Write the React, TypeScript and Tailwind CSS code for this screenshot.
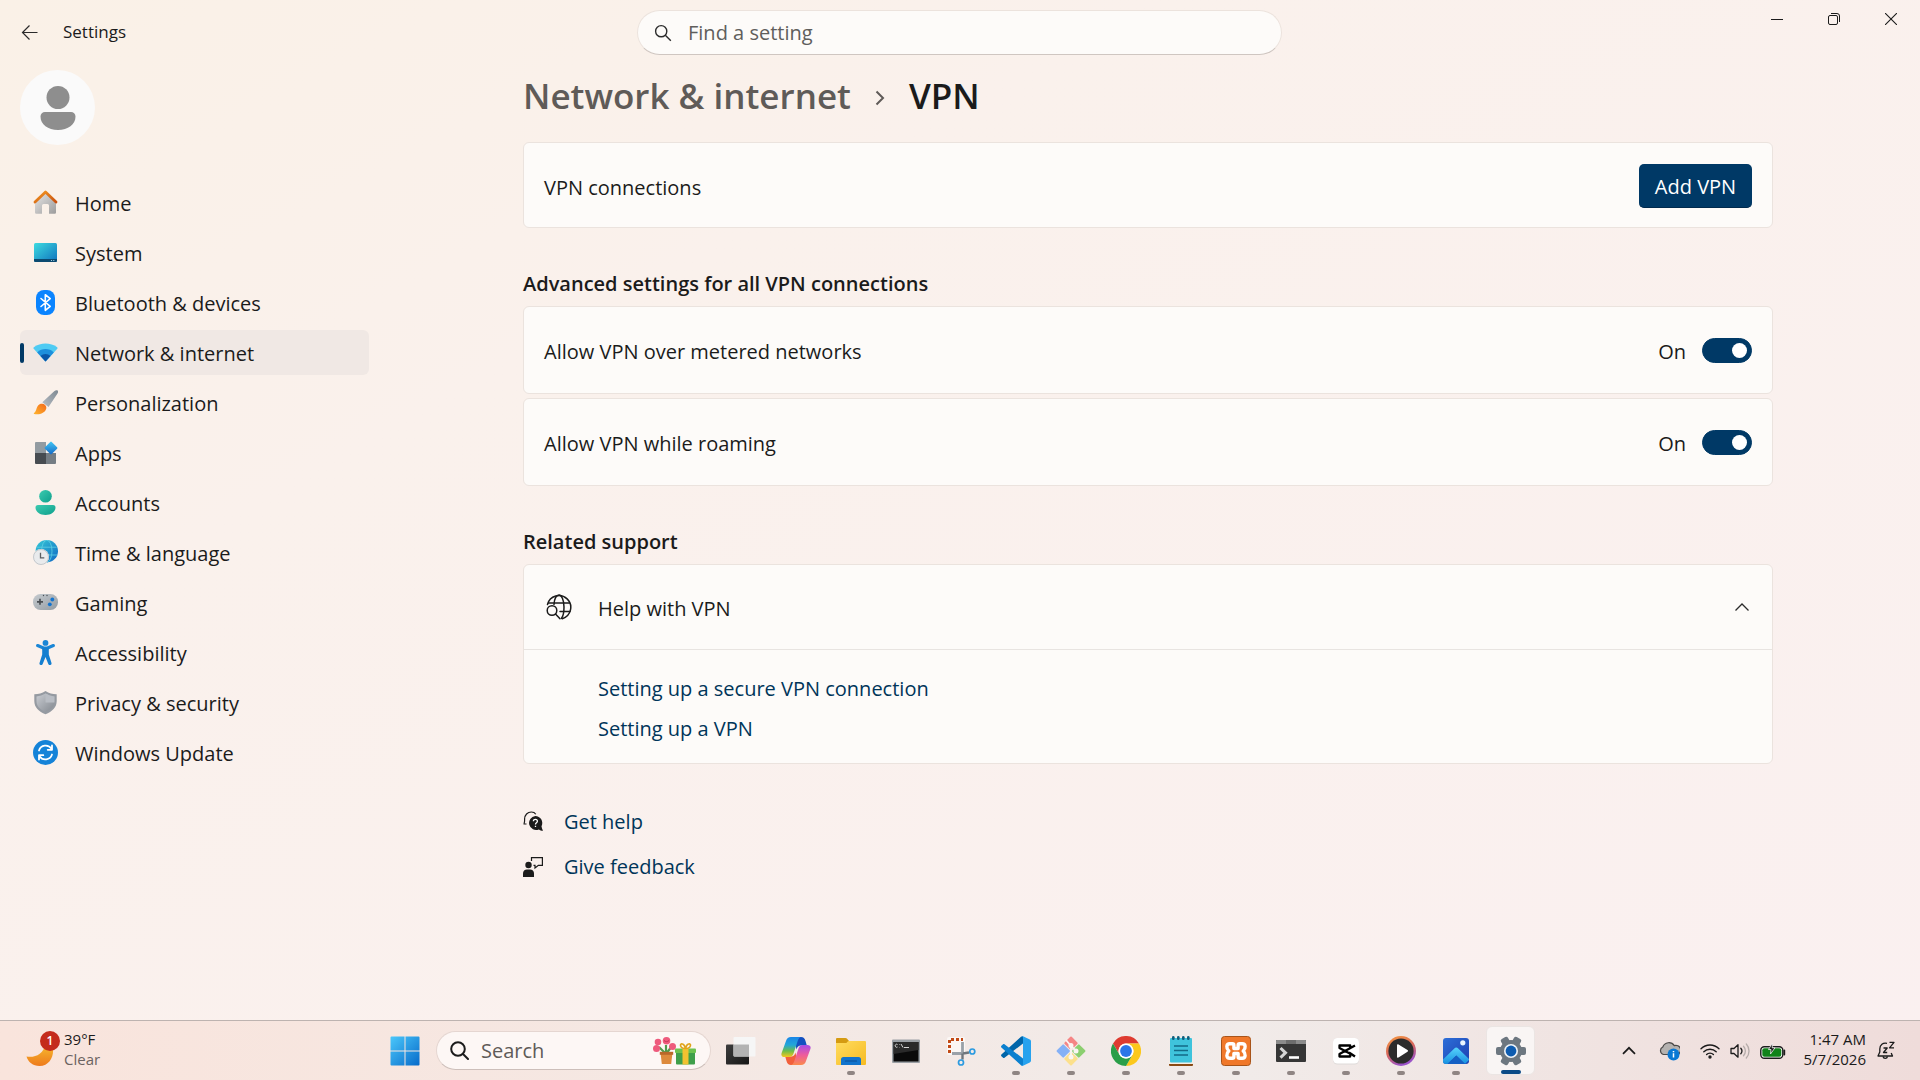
import { useState } from 'react'
import type { ReactNode } from 'react'
import clsx from 'clsx'

interface NavItem {
  label: string
  icon: ReactNode
}

interface TaskApp {
  name: string
  icon: ReactNode
  running?: boolean
  active?: boolean
}

/* ---------- sidebar icons ---------- */

const HomeIcon = () => (
  <svg viewBox="0 0 25 25" className="size-[25px]">
    <defs>
      <linearGradient id="homeWall" x1="0" y1="0" x2="1" y2="1">
        <stop offset="0" stopColor="#e8e8e8" />
        <stop offset="1" stopColor="#9c9c9c" />
      </linearGradient>
      <linearGradient id="homeRoof" x1="0" y1="0" x2="1" y2="1">
        <stop offset="0" stopColor="#f59a23" />
        <stop offset="1" stopColor="#c8500f" />
      </linearGradient>
    </defs>
    <path d="M2 11 12.500 2 23 11v11.500a1.200 1.200 0 0 1-1.200 1.200H16V15.500a1.500 1.500 0 0 0-1.500-1.500h-4A1.500 1.500 0 0 0 9 15.500v8.200H3.200A1.200 1.200 0 0 1 2 22.500Z" fill="url(#homeWall)" />
    <path d="M2 12 12.500 2 23 12" fill="none" stroke="url(#homeRoof)" strokeWidth="2.800" strokeLinecap="round" strokeLinejoin="round" />
  </svg>
)

const SystemIcon = () => (
  <svg viewBox="0 0 25 25" className="size-[25px]">
    <defs>
      <linearGradient id="sysScreen" x1="0" y1="0" x2="1" y2="1">
        <stop offset="0" stopColor="#3ddbe0" />
        <stop offset="1" stopColor="#0f72bd" />
      </linearGradient>
    </defs>
    <rect x="1" y="3" width="23" height="19" rx="1.500" fill="url(#sysScreen)" />
    <path d="M1 19h23v1.500a1.500 1.500 0 0 1-1.500 1.500h-20A1.500 1.500 0 0 1 1 20.500Z" fill="#0b4a70" />
    <circle cx="18.500" cy="20.500" r=".6" fill="#bfe6f5" />
    <circle cx="20.800" cy="20.500" r=".6" fill="#bfe6f5" />
  </svg>
)

const BluetoothIcon = () => (
  <svg viewBox="0 0 25 25" className="size-[25px]">
    <rect x="3" y="0" width="19" height="25" rx="8" fill="#0a84ff" />
    <path d="m8 8.500 9.200 7.800-4.900 4V4.700l4.900 4L8 16.500" fill="none" stroke="#fff" strokeWidth="1.600" strokeLinejoin="round" strokeLinecap="round" />
  </svg>
)

const NetworkIcon = () => (
  <svg viewBox="0 0 25 25" className="size-[25px]">
    <path d="M12.500 21.500.7 8.700a1 1 0 0 1 .1-1.400C7.500 2.300 17.500 2.300 24.200 7.300a1 1 0 0 1 .1 1.400Z" fill="#4fcbf3" />
    <path d="M12.500 21.500 4.200 12.400c4.600-4.400 12-4.400 16.600 0Z" fill="#1d8fdc" />
    <path d="M12.500 21.500 7.500 16c2.700-2.700 7.300-2.700 10 0Z" fill="#0a57a8" />
  </svg>
)

const BrushIcon = () => (
  <svg viewBox="0 0 25 25" className="size-[25px]">
    <defs>
      <linearGradient id="brushStem" x1="1" y1="0" x2="0" y2="1">
        <stop offset="0" stopColor="#7e8992" />
        <stop offset="1" stopColor="#b8bfc5" />
      </linearGradient>
      <linearGradient id="brushTip" x1="1" y1="0" x2="0" y2="1">
        <stop offset="0" stopColor="#f26a1b" />
        <stop offset="1" stopColor="#ffb52e" />
      </linearGradient>
    </defs>
    <path d="M24.600.6c.8.900.5 1.900-.1 2.900L15.500 17 9.300 12.200 21.200 1.300c1.200-1 2.500-1.600 3.400-.7Z" fill="url(#brushStem)" />
    <path d="M7.800 13.800c3.300-.8 6.300 1.700 5.400 5-1.200 4.500-7 6.300-12 5.200-.6-.1-.6-.8-.1-1.100 3.200-1.800 1.700-7.900 6.700-9.100Z" fill="url(#brushTip)" />
  </svg>
)

const AppsIcon = () => (
  <svg viewBox="0 0 25 25" className="size-[25px]">
    <defs>
      <linearGradient id="appsTile" x1="0" y1="0" x2="1" y2="1">
        <stop offset="0" stopColor="#43c7f4" />
        <stop offset="1" stopColor="#1469c7" />
      </linearGradient>
    </defs>
    <path d="M3 2h10v11H2V3a1 1 0 0 1 1-1Z" fill="#929ba1" />
    <path d="M2 13h11v11H3a1 1 0 0 1-1-1Z" fill="#474c51" />
    <path d="M13 13h10v10a1 1 0 0 1-1 1h-9Z" fill="#757d84" />
    <rect x="13.200" y="3.200" width="9.600" height="9.600" rx="1" transform="rotate(45 18 8)" fill="url(#appsTile)" />
  </svg>
)

const AccountsIcon = () => (
  <svg viewBox="0 0 25 25" className="size-[25px]">
    <defs>
      <linearGradient id="accFill" x1="0" y1="0" x2="1" y2="1">
        <stop offset="0" stopColor="#3ccbb0" />
        <stop offset="1" stopColor="#0e9f8c" />
      </linearGradient>
    </defs>
    <circle cx="12.500" cy="6.300" r="6.300" fill="url(#accFill)" />
    <path d="M5 15h15a2.500 2.500 0 0 1 2.500 2.500c0 4.500-4.500 7.500-10 7.500s-10-3-10-7.500A2.500 2.500 0 0 1 5 15Z" fill="url(#accFill)" />
  </svg>
)

const TimeIcon = () => (
  <svg viewBox="0 0 25 25" className="size-[25px]">
    <defs>
      <linearGradient id="timeGlobe" x1="0" y1="0" x2="1" y2="1">
        <stop offset="0" stopColor="#35c8d6" />
        <stop offset="1" stopColor="#1169c4" />
      </linearGradient>
    </defs>
    <circle cx="13.800" cy="11.200" r="11.200" fill="url(#timeGlobe)" />
    <g fill="none" stroke="#5fd0e4" strokeWidth=".8">
      <ellipse cx="13.800" cy="11.200" rx="5.200" ry="11" />
      <path d="M4 7.200h19.600M8 15h16.300" />
    </g>
    <circle cx="8" cy="17" r="8" fill="#e9ebed" />
    <circle cx="8" cy="17" r="7.500" fill="none" stroke="#c6c9cc" />
    <path d="M7.500 12.800v5h3.800" fill="none" stroke="#5b5f63" strokeWidth="1.300" />
  </svg>
)

const GamingIcon = () => (
  <svg viewBox="0 0 25 25" className="size-[25px]">
    <defs>
      <linearGradient id="padFill" x1="0" y1="0" x2="1" y2="1">
        <stop offset="0" stopColor="#c6cbcf" />
        <stop offset="1" stopColor="#949ca3" />
      </linearGradient>
    </defs>
    <rect x="0" y="4" width="25" height="16" rx="7.500" fill="url(#padFill)" />
    <path d="M7 8.800v6M4 11.800h6" stroke="#4a4f54" strokeWidth="1.700" />
    <circle cx="19.300" cy="9.500" r="1.900" fill="#1374cf" />
    <circle cx="16.800" cy="14.300" r="1.900" fill="#1374cf" />
    <circle cx="10.500" cy="5.500" r=".7" fill="#4a4f54" />
    <circle cx="14" cy="5.500" r=".7" fill="#4a4f54" />
  </svg>
)

const AccessibilityIcon = () => (
  <svg viewBox="0 0 25 25" className="size-[25px]">
    <circle cx="12.500" cy="2.900" r="2.900" fill="#1a86d6" />
    <path d="M4.600 5.600 10.500 8h4l5.900-2.400" fill="none" stroke="#1a86d6" strokeWidth="3.200" strokeLinecap="round" strokeLinejoin="round" />
    <path d="M9.200 7.500h6.600v7L18.500 23a1.700 1.700 0 0 1-3.200 1.100L12.500 17l-2.800 7.100A1.700 1.700 0 0 1 6.500 23l2.700-8.500Z" fill="#157fd0" />
  </svg>
)

const ShieldIcon = () => (
  <svg viewBox="0 0 25 25" className="size-[25px]">
    <defs>
      <linearGradient id="shieldFill" x1="0" y1="0" x2="1" y2="1">
        <stop offset="0" stopColor="#c9ccd2" />
        <stop offset="1" stopColor="#83888f" />
      </linearGradient>
    </defs>
    <path d="M12.500 1c3.400 2.200 7 3.200 11.200 3.300V11c0 6.500-4.500 10.600-11.200 13.200C5.800 21.600 1.300 17.500 1.300 11V4.300C5.500 4.200 9.100 3.200 12.500 1Z" fill="#959aa1" />
    <path d="M12.500 3.600c2.900 1.700 5.700 2.500 9 2.800V11c0 5.300-3.600 8.600-9 10.900C7.100 19.600 3.500 16.300 3.500 11V6.400c3.300-.3 6.100-1.100 9-2.800Z" fill="url(#shieldFill)" />
    <path d="M12.500 3.600V12.500h8.900c.1-.5.1-1 .1-1.500V6.400c-3.300-.3-6.100-1.100-9-2.800Z" fill="#b9bdc4" />
  </svg>
)

const UpdateIcon = () => (
  <svg viewBox="0 0 25 25" className="size-[25px]">
    <circle cx="12.500" cy="12.500" r="12.500" fill="#1583d8" />
    <g fill="none" stroke="#fff" strokeWidth="1.800" strokeLinecap="round" strokeLinejoin="round">
      <path d="M6 10.500a7 7 0 0 1 12.500-1.800M19 5.500v4.300h-4.300" />
      <path d="M19 14.500a7 7 0 0 1-12.500 1.800M6 19.500v-4.300h4.300" />
    </g>
  </svg>
)

const navItems: NavItem[] = [
  { label: 'Home', icon: <HomeIcon /> },
  { label: 'System', icon: <SystemIcon /> },
  { label: 'Bluetooth & devices', icon: <BluetoothIcon /> },
  { label: 'Network & internet', icon: <NetworkIcon /> },
  { label: 'Personalization', icon: <BrushIcon /> },
  { label: 'Apps', icon: <AppsIcon /> },
  { label: 'Accounts', icon: <AccountsIcon /> },
  { label: 'Time & language', icon: <TimeIcon /> },
  { label: 'Gaming', icon: <GamingIcon /> },
  { label: 'Accessibility', icon: <AccessibilityIcon /> },
  { label: 'Privacy & security', icon: <ShieldIcon /> },
  { label: 'Windows Update', icon: <UpdateIcon /> },
]

/* ---------- taskbar icons ---------- */

const StartIcon = () => (
  <svg viewBox="0 0 30 30" className="size-[30px]">
    <defs>
      <linearGradient id="startFill" x1="0" y1="0" x2="30" y2="30" gradientUnits="userSpaceOnUse">
        <stop offset="0" stopColor="#4cc9fb" />
        <stop offset="1" stopColor="#0669c9" />
      </linearGradient>
    </defs>
    <path d="M1.500.5h13v14h-14v-13a1 1 0 0 1 1-1ZM15.500.5h13a1 1 0 0 1 1 1v13h-14ZM.5 15.500h14v14h-13a1 1 0 0 1-1-1ZM15.500 15.500h14v13a1 1 0 0 1-1 1h-13Z" fill="url(#startFill)" />
  </svg>
)

const TaskViewIcon = () => (
  <svg viewBox="0 0 30 30" className="size-[30px]">
    <defs>
      <linearGradient id="tvDark" x1="0" y1="0" x2="1" y2="1">
        <stop offset="0" stopColor="#3d3d3d" />
        <stop offset="1" stopColor="#161616" />
      </linearGradient>
    </defs>
    <rect x="0" y="8.500" width="23" height="20" rx="1" fill="url(#tvDark)" />
    <rect x="7.500" y="1" width="22" height="19.500" rx="1" fill="#f6f6f6" />
    <path d="M7.500 8.500H23v12H8.500a1 1 0 0 1-1-1Z" fill="#b3b3b3" />
  </svg>
)

const CopilotIcon = () => (
  <svg viewBox="0 0 30 28" className="h-7 w-[30px]">
    <defs>
      <linearGradient id="cpLeft" x1="0" y1="0" x2="0" y2="1">
        <stop offset="0" stopColor="#1a86e8" />
        <stop offset=".4" stopColor="#22a6d8" />
        <stop offset=".7" stopColor="#6dbd4a" />
        <stop offset="1" stopColor="#f7c71d" />
      </linearGradient>
      <linearGradient id="cpRight" x1="0" y1="1" x2="0" y2="0">
        <stop offset="0" stopColor="#a64be8" />
        <stop offset=".5" stopColor="#ee5c9c" />
        <stop offset="1" stopColor="#fb8a4c" />
      </linearGradient>
    </defs>
    <path d="M13 0h7c2.500 0 3.800 1.500 4.500 4L25.800 8.500H20c-2.500 0-3.800 1.500-4.500 4Z" fill="#1450c0" />
    <path d="M17 28h-7c-2.500 0-3.800-1.500-4.500-4L4.200 19.500H10c2.500 0 3.800-1.500 4.500-4Z" fill="#f2603c" />
    <path d="M20.500 0H10C7.300 0 5.800 1.500 5 4L.8 15.500C-.4 18.500 1 20 3.600 20H8c2.500 0 4-1.500 4.700-4L16.500 4.500C17.300 2 18.500 0 20.500 0Z" fill="url(#cpLeft)" />
    <path d="M20.500 0H10C7.300 0 5.800 1.500 5 4L.8 15.500C-.4 18.500 1 20 3.600 20H8c2.500 0 4-1.500 4.700-4L16.500 4.500C17.300 2 18.500 0 20.500 0Z" transform="rotate(180 15 14)" fill="url(#cpRight)" />
  </svg>
)

const ExplorerIcon = () => (
  <svg viewBox="0 0 30 30" className="size-[30px]">
    <defs>
      <linearGradient id="folderFront" x1="0" y1="0" x2="1" y2="1">
        <stop offset="0" stopColor="#ffdc60" />
        <stop offset="1" stopColor="#f6bb22" />
      </linearGradient>
    </defs>
    <path d="M0 3a1 1 0 0 1 1-1h8.500a2 2 0 0 1 1.400.6L13 5v6H0Z" fill="#d59b12" />
    <path d="M0 7h9.500a2 2 0 0 0 1.400-.6l.8-.8A2 2 0 0 1 13 5h16a1 1 0 0 1 1 1v22a1 1 0 0 1-1 1H1a1 1 0 0 1-1-1Z" fill="url(#folderFront)" />
    <path d="M7.500 21h15a2.500 2.500 0 0 1 2.500 2.500V29H5v-5.500A2.500 2.500 0 0 1 7.500 21Z" fill="#1173cc" />
    <path d="M9.500 25h11" stroke="#0a4f96" strokeWidth="1.200" strokeLinecap="round" />
  </svg>
)

const CmdIcon = () => (
  <svg viewBox="0 0 30 30" className="size-[30px]">
    <rect x="1" y="3.500" width="28" height="23.500" rx="1" fill="#9ba0a5" />
    <rect x="2.500" y="6" width="25" height="19.500" fill="#0a0a0a" />
    <path d="M2.500 6h25v8L2.500 18Z" fill="#2a2a2a" />
    <path d="M6.500 8.500a1.500 1.500 0 1 0 0 2.500M8.500 8.500v.5M8.500 11v.3M10 8l2 3.500M13 11.500h5" fill="none" stroke="#e8e8e8" strokeWidth=".9" />
  </svg>
)

const SnipIcon = () => (
  <svg viewBox="0 0 30 30" className="size-[30px]">
    <rect x="1" y="1" width="18" height="18" rx="2" fill="#fbf7f5" />
    <path d="M3.500 17V3.500H17" fill="none" stroke="#c24a16" strokeWidth="3" strokeDasharray="3 2" />
    <path d="M16.500 6v11.500M6 17.500h11" stroke="#9aa1a8" strokeWidth="2.800" />
    <path d="M16.500 17.500v6M17 17.500l6-1" stroke="#70777d" strokeWidth="2.400" />
    <circle cx="15" cy="26.500" r="2.500" fill="none" stroke="#2c9be0" strokeWidth="1.700" />
    <circle cx="26.300" cy="15.500" r="2.500" fill="none" stroke="#2c9be0" strokeWidth="1.700" />
  </svg>
)

const CodeIcon = () => (
  <svg viewBox="0 0 30 30" className="size-[30px]">
    <path d="M22 7.500 3.500 21.800c-.5.400-1 .3-1.400 0L.4 20.200c-.5-.5-.5-1.200 0-1.700L20 .8c.5-.5 1.300-.7 2-.5Z" fill="#0065a9" />
    <path d="M22 22.500 3.500 8.200c-.5-.4-1-.3-1.400 0L.4 9.800c-.5.500-.5 1.200 0 1.700L20 29.200c.5.500 1.300.7 2 .5Z" fill="#0b80cf" />
    <path d="M22 .3 28.800 3.600c.7.400 1.200 1 1.200 1.900v19c0 .9-.5 1.500-1.200 1.900L22 29.700c-.8.300-1.600.1-2.300-.5.900.8 2.300.2 2.300-1.100V1.900c0-1.300-1.400-1.900-2.300-1.100.7-.6 1.500-.8 2.300-.5Z" fill="#27a2ee" />
  </svg>
)

const GitIcon = () => (
  <svg viewBox="0 0 30 30" className="size-[30px]">
    <g transform="rotate(45 15 15)">
      <rect x="4.500" y="4.500" width="10" height="10" rx="1" fill="#f58585" />
      <rect x="15.500" y="4.500" width="10" height="10" rx="1" fill="#8ccf70" />
      <rect x="15.500" y="15.500" width="10" height="10" rx="1" fill="#fce08c" />
      <rect x="4.500" y="15.500" width="10" height="10" rx="1" fill="#85b1f6" />
    </g>
    <g stroke="#fbf5f3" strokeWidth="1.800" fill="#fbf5f3">
      <path d="m10 4 5 6v11M15 10l5 5" fill="none" />
      <circle cx="15" cy="9.500" r="1.600" />
      <circle cx="20" cy="15" r="1.600" />
      <circle cx="15" cy="21" r="1.600" />
    </g>
  </svg>
)

const ChromeIcon = () => (
  <svg viewBox="0 0 30 30" className="size-[30px]">
    <path d="M15 7.500h13a15 15 0 0 0-26 0l6.500 11.250A7.500 7.500 0 0 1 15 7.500Z" fill="#de3b30" />
    <path d="M28 7.500A15 15 0 0 1 15 30l6.500-11.250A7.500 7.500 0 0 0 15 7.500Z" fill="#fcc81c" />
    <path d="M2 7.500A15 15 0 0 0 15 30l6.500-11.250a7.500 7.500 0 0 1-13 0Z" fill="#2a9e48" />
    <circle cx="15" cy="15" r="7.500" fill="#fff" />
    <circle cx="15" cy="15" r="5.900" fill="#2b75e8" />
  </svg>
)

const NotepadIcon = () => (
  <svg viewBox="0 0 30 30" className="size-[30px]">
    <rect x="3" y="26" width="24" height="4" rx="1" fill="#8a4a14" />
    <rect x="3" y="25" width="24" height="3" fill="#f4efe6" />
    <rect x="4" y="2" width="22" height="24.500" rx="1" fill="#3fc3dc" />
    <path d="M8 10h14M8 14.500h14M8 19h14" stroke="#136a86" strokeWidth="1.700" />
    <g fill="#0f5f7c">
      <rect x="6" y="0" width="2.600" height="4" rx="1.300" />
      <rect x="11" y="0" width="2.600" height="4" rx="1.300" />
      <rect x="16" y="0" width="2.600" height="4" rx="1.300" />
      <rect x="21" y="0" width="2.600" height="4" rx="1.300" />
    </g>
  </svg>
)

const XamppIcon = () => (
  <svg viewBox="0 0 30 30" className="size-[30px]">
    <rect x=".5" y=".5" width="29" height="29" rx="3" fill="#f0782a" stroke="#a8541a" />
    <path d="M8.800 7.800h2.600c1 0 1.500.6 1.500 1.500v3.200h4.200V9.300c0-.9.500-1.500 1.500-1.500h2.600c3.700 0 3.800 4.700 1 7.200 2.800 2.500 2.700 7.200-1 7.200h-2.600c-1 0-1.500-.6-1.500-1.500v-3.200h-4.200v3.200c0 .9-.5 1.500-1.500 1.500H8.800c-3.700 0-3.800-4.700-1-7.200-2.800-2.500-2.700-7.200 1-7.200Z" fill="none" stroke="#fff" strokeWidth="3.400" strokeLinejoin="round" />
  </svg>
)

const TerminalIcon = () => (
  <svg viewBox="0 0 30 30" className="size-[30px]">
    <rect x="0" y="4" width="30" height="22" rx="1" fill="#363636" />
    <path d="M1 4h28a1 1 0 0 1 1 1v3H0V5a1 1 0 0 1 1-1Z" fill="#8b8b8b" />
    <path d="M10 4h10v4H10Z" fill="#6d6d6d" />
    <path d="m4.500 12 5 4.800-5 4.800" fill="none" stroke="#d6d6d6" strokeWidth="3" />
    <path d="M13 21.500h10" stroke="#fff" strokeWidth="2.600" />
  </svg>
)

const CapcutIcon = () => (
  <svg viewBox="0 0 30 30" className="size-[30px]">
    <rect x="2" y="2" width="26" height="26.500" rx="4.500" fill="#dedad9" />
    <rect x="2" y="2" width="26" height="25.500" rx="4.500" fill="#fff" />
    <path d="M24 9.500 8.500 18v2.500h10.700v-2.800L8.500 12V9.500h10.700v2.800M18 16.500l6 4" fill="none" stroke="#000" strokeWidth="2.300" strokeLinejoin="round" />
  </svg>
)

const MediaIcon = () => (
  <svg viewBox="0 0 30 30" className="size-[30px]">
    <defs>
      <linearGradient id="mediaRing" x1="0" y1="0" x2=".4" y2="1">
        <stop offset="0" stopColor="#f79a3c" />
        <stop offset=".55" stopColor="#d8685c" />
        <stop offset="1" stopColor="#9a52c8" />
      </linearGradient>
    </defs>
    <circle cx="15" cy="15" r="15" fill="url(#mediaRing)" />
    <circle cx="15" cy="15" r="12.600" fill="#2c2c2c" />
    <path d="M11 9.200c0-.8.800-1.200 1.500-.8l9 5.700c.7.400.7 1.300 0 1.700l-9 5.700c-.7.400-1.500 0-1.500-.8Z" fill="#fff" />
  </svg>
)

const PhotosIcon = () => (
  <svg viewBox="0 0 30 30" className="size-[30px]">
    <defs>
      <linearGradient id="photoBg" x1="0" y1="0" x2="1" y2="1">
        <stop offset="0" stopColor="#2d6fd8" />
        <stop offset="1" stopColor="#1c3fb0" />
      </linearGradient>
      <linearGradient id="photoHill" x1="0" y1="0" x2="0" y2="1">
        <stop offset="0" stopColor="#56d2fb" />
        <stop offset="1" stopColor="#178fe0" />
      </linearGradient>
      <clipPath id="photoClip">
        <rect x="2" y="2" width="26" height="26" rx="3" />
      </clipPath>
    </defs>
    <g clipPath="url(#photoClip)">
      <rect x="2" y="2" width="26" height="26" fill="url(#photoBg)" />
      <path d="M2 23.500 13.300 12.500a2.800 2.800 0 0 1 3.900 0L28 23v1l-4 4-8.700-8.500L6.500 28H2Z" fill="url(#photoHill)" />
      <path d="m6.500 28 8.800-8.500L24 28Z" fill="#1560c4" />
    </g>
    <circle cx="21.800" cy="6.800" r="2.600" fill="#eaf5ff" />
  </svg>
)

const GearIcon = () => (
  <svg viewBox="0 0 30 30" className="size-[30px]">
    <g fill="#6d7780">
      <circle cx="15" cy="15" r="11" />
      <rect x="0" y="11" width="30" height="8" rx="2" />
      <rect x="0" y="11" width="30" height="8" rx="2" transform="rotate(60 15 15)" />
      <rect x="0" y="11" width="30" height="8" rx="2" transform="rotate(120 15 15)" />
    </g>
    <circle cx="15" cy="15" r="7" fill="#eef3f8" />
    <circle cx="15" cy="15" r="5.400" fill="#0e5cb0" />
  </svg>
)

const BouquetIcon = () => (
  <svg viewBox="0 0 44 28" className="h-7 w-11">
    <path d="M13 17V8M13 17 6 10M13 17l6-8" stroke="#4f9a4c" strokeWidth="2.200" />
    <g fill="#ee5a7c">
      <circle cx="5" cy="5" r="3.300" />
      <circle cx="13.500" cy="3.800" r="3.800" />
      <circle cx="3.500" cy="11.500" r="3.500" />
      <circle cx="19.500" cy="9.500" r="3.500" />
    </g>
    <path d="M11 3.500c1.500 1.500 3.500 1.500 5 0" stroke="#c43358" fill="none" />
    <path d="M7.500 15.500h12l-1.300 11.500h-9.400Z" fill="#dd8a3c" />
    <path d="M6.800 14.800h13.400v3H6.800Z" fill="#b9682a" />
    <rect x="23" y="14" width="19" height="13.500" rx="1" fill="#3f9f4b" />
    <rect x="22" y="11.500" width="21" height="4.500" rx="1" fill="#6cc24f" />
    <path d="M29.500 11.500h6v16h-6Z" fill="#f2c230" />
    <path d="M32.500 11.500c-6 0-6-5.500-3-4.500 2 .5 3 4.500 3 4.500s1-4 3-4.500c3-1 3 4.500-3 4.500Z" fill="none" stroke="#e0a51c" strokeWidth="1.700" />
  </svg>
)

const taskApps: TaskApp[] = [
  { name: 'Task view', icon: <TaskViewIcon /> },
  { name: 'Copilot', icon: <CopilotIcon /> },
  { name: 'File Explorer', icon: <ExplorerIcon />, running: true },
  { name: 'Command Prompt', icon: <CmdIcon /> },
  { name: 'Snipping Tool', icon: <SnipIcon /> },
  { name: 'Visual Studio Code', icon: <CodeIcon />, running: true },
  { name: 'Git', icon: <GitIcon />, running: true },
  { name: 'Google Chrome', icon: <ChromeIcon />, running: true },
  { name: 'Notepad', icon: <NotepadIcon />, running: true },
  { name: 'XAMPP', icon: <XamppIcon />, running: true },
  { name: 'Terminal', icon: <TerminalIcon />, running: true },
  { name: 'CapCut', icon: <CapcutIcon />, running: true },
  { name: 'Media Player', icon: <MediaIcon />, running: true },
  { name: 'Photos', icon: <PhotosIcon />, running: true },
  { name: 'Settings', icon: <GearIcon />, running: true, active: true },
]

/* ---------- window parts ---------- */

function TitleBar() {
  return (
    <header className="grid h-16 grid-cols-[1fr_645px_1fr] pr-px">
      <div className="flex items-center gap-[25px] pl-[21px]">
        <button aria-label="Back">
          <svg viewBox="0 0 17 17" className="size-[17px]" fill="none" stroke="#2b2b2b" strokeWidth="1.200">
            <path d="M16.500 8.500H1.500M8.500 1.500l-7 7 7 7" />
          </svg>
        </button>
        <span className="text-[17px]">Settings</span>
      </div>
      <label className="mt-[10px] flex h-[45px] items-center gap-4 rounded-full border border-[#ece3dd] border-b-[#cfc6c1] bg-[#fdfbf9] px-4">
        <svg viewBox="0 0 18 18" className="size-[18px]" fill="none" stroke="#2b2b2b" strokeWidth="1.400">
          <circle cx="7.200" cy="7.200" r="5.600" />
          <path d="m11.300 11.300 5.500 5.500" />
        </svg>
        <input
          aria-label="Find a setting"
          placeholder="Find a setting"
          className="min-w-0 flex-1 bg-transparent outline-none placeholder:text-[#605e5c]"
        />
      </label>
      <div className="flex justify-end">
        <button aria-label="Minimize" className="flex h-[38px] w-[57px] items-center justify-center">
          <svg viewBox="0 0 12 12" className="size-3" stroke="#1b1b1b">
            <path d="M0 6.500h12" />
          </svg>
        </button>
        <button aria-label="Restore" className="flex h-[38px] w-[57px] items-center justify-center">
          <svg viewBox="0 0 12 12" className="size-3" fill="none" stroke="#1b1b1b">
            <rect x=".5" y="2.500" width="9" height="9" rx="1.500" />
            <path d="M3 .5h6a2.500 2.500 0 0 1 2.500 2.500v6" />
          </svg>
        </button>
        <button aria-label="Close" className="flex h-[38px] w-[57px] items-center justify-center">
          <svg viewBox="0 0 12 12" className="size-3" stroke="#1b1b1b" strokeWidth="1.100">
            <path d="m0 0 12 12M12 0 0 12" />
          </svg>
        </button>
      </div>
    </header>
  )
}

function Sidebar() {
  const [current, setCurrent] = useState('Network & internet')

  return (
    <aside className="w-[376px] shrink-0 pt-[6px] pr-[7px] pl-5">
      <div className="flex size-[75px] items-center justify-center rounded-full bg-[#fafafa]">
        <svg viewBox="0 0 36 44" className="h-11 w-9" fill="#8e8e8e">
          <circle cx="18" cy="11.500" r="11.500" />
          <path d="M5 26h26a4.500 4.500 0 0 1 4.500 4.500C35.500 38.500 28 44 18 44S.5 38.500.5 30.500A4.500 4.500 0 0 1 5 26Z" />
        </svg>
      </div>
      <nav className="mt-[35px] flex flex-col gap-[5px]">
        {navItems.map(item => (
          <a
            key={item.label}
            href="#"
            onClick={() => setCurrent(item.label)}
            className={clsx(
              'relative flex h-[45px] items-center gap-[17px] rounded-md pl-[13px]',
              current === item.label && 'bg-[#f0e8e4]'
            )}
          >
            {current === item.label && (
              <span className="absolute top-[13px] left-0 h-5 w-1 rounded-full bg-[#003966]" />
            )}
            {item.icon}
            <span className="pt-0.5">{item.label}</span>
          </a>
        ))}
      </nav>
    </aside>
  )
}

function ToggleRow({ id, label }: { id: string; label: string }) {
  const [on, setOn] = useState(true)

  return (
    <div className="flex h-[88px] items-center rounded-md border border-[#ebe3de] bg-[#fdfbf9] px-5">
      <label htmlFor={id} className="flex-1 pt-1">{label}</label>
      <span className="mr-4 pt-1">{on ? 'On' : 'Off'}</span>
      <input
        id={id}
        type="checkbox"
        role="switch"
        checked={on}
        onChange={e => setOn(e.target.checked)}
        className="flex h-[25px] w-[50px] appearance-none items-center rounded-full border border-[#8a8886] px-1 before:size-[15px] before:rounded-full before:bg-[#5d5b59] checked:justify-end checked:border-[#003966] checked:bg-[#003966] checked:before:bg-white"
      />
    </div>
  )
}

function VpnPage() {
  const [open, setOpen] = useState(true)

  return (
    <main className="min-w-0 flex-1 pt-2">
      <div className="mx-auto max-w-[1250px]">
        <h1 className="flex h-12 items-center text-[35px] font-semibold">
          <a href="#" className="text-[#5f5b58]">Network & internet</a>
          <svg viewBox="0 0 10 16" className="mx-6 mt-1 h-4 w-[10px]" fill="none" stroke="#5f5b58" strokeWidth="2">
            <path d="m1.500 1.500 6.500 6.500-6.500 6.500" />
          </svg>
          <span>VPN</span>
        </h1>

        <section className="mt-[22px] flex h-[86px] items-center justify-between rounded-md border border-[#ebe3de] bg-[#fdfbf9] px-5 pt-0.5">
          <span className="pt-1">VPN connections</span>
          <button className="h-11 w-[113px] rounded-[5px] border-b border-[#002a4d] bg-[#003966] pt-0.5 text-white">
            Add VPN
          </button>
        </section>

        <h2 className="mt-[42px] font-semibold">Advanced settings for all VPN connections</h2>
        <div className="mt-2 flex flex-col gap-1">
          <ToggleRow id="metered" label="Allow VPN over metered networks" />
          <ToggleRow id="roaming" label="Allow VPN while roaming" />
        </div>

        <h2 className="mt-[42px] font-semibold">Related support</h2>
        <section className="mt-2 rounded-md border border-[#ebe3de] bg-[#fdfbf9]">
          <button
            aria-expanded={open}
            onClick={() => setOpen(!open)}
            className="flex h-[84px] w-full items-center px-[22px] text-left"
          >
            <svg viewBox="0 0 26 26" className="size-[26px]" fill="none" stroke="#1b1b1b" strokeWidth="1.500" strokeLinecap="round">
              <path d="M1.500 10.500a11.800 11.800 0 1 1 14.800 14.200" />
              <path d="M8 10.500C8.200 5 10.300 1 13 1s5 5.200 5 12c0 4.800-.9 9.300-2.500 11.300" />
              <path d="M2.500 9h21M14 17.500h10" />
              <circle cx="6" cy="16.500" r="4.800" />
              <path d="m9.500 20 4.500 4.800" />
            </svg>
            <span className="ml-[26px] flex-1 pt-1">Help with VPN</span>
            <svg viewBox="0 0 16 10" className={clsx('h-[10px] w-4', !open && 'rotate-180')} fill="none" stroke="#2b2b2b" strokeWidth="1.300">
              <path d="m1.500 8.500 6.500-6.500 6.500 6.500" />
            </svg>
          </button>
          {open && (
            <div className="flex flex-col items-start gap-3 border-t border-[#e8e4e1] pt-[25px] pb-5 pl-[74px]">
              <a href="#" className="text-[#003559]">Setting up a secure VPN connection</a>
              <a href="#" className="text-[#003559]">Setting up a VPN</a>
            </div>
          )}
        </section>

        <div className="mt-[42px] flex flex-col items-start gap-[17px]">
          <a href="#" className="flex items-center gap-[21px] text-[#003559]">
            <svg viewBox="0 0 20 20" className="size-5">
              <path d="M1 12.500c.8-1.500.6-2.600.6-4.500C1.600 4 4.600 1 8.300 1c2 0 3.700.9 4.500 2.200M.5 13h3" fill="none" stroke="#1b1b1b" strokeWidth="1.200" />
              <path d="M12.300 5a7 7 0 0 1 6.200 10.200c.2 1.400.7 2.800 1.500 4.500-1.800-.2-3-.5-4.200-1.300A7 7 0 1 1 12.300 5Z" fill="#1b1b1b" />
              <path d="M10.400 10.300c0-2.700 4-2.500 4-.1 0 1.600-1.900 1.500-1.900 3.200M12.500 14.700v1.200" fill="none" stroke="#fff" strokeWidth="1.300" />
            </svg>
            <span className="pt-0.5">Get help</span>
          </a>
          <a href="#" className="flex items-center gap-[21px] text-[#003559]">
            <svg viewBox="0 0 20 20" className="size-5">
              <circle cx="5.500" cy="8" r="3.200" fill="#1b1b1b" />
              <path d="M0 20v-3.500C0 14 1.800 12.500 3.800 12.500h3.400c2 0 3.800 1.500 3.800 4V20Z" fill="#1b1b1b" />
              <path d="M8.500 4V.7h10.900v7.600h-4L12 11V8.300h-1.500" fill="none" stroke="#1b1b1b" strokeWidth="1.200" />
            </svg>
            Give feedback
          </a>
        </div>
      </div>
    </main>
  )
}

function Taskbar() {
  return (
    <footer className="grid h-[60px] grid-cols-[1fr_auto_1fr] border-t border-[#bdb3b0] bg-linear-to-r from-[#f9e4dc] via-[#f1ebe9] via-65% to-[#efdcda]">
      <button className="flex items-center gap-1 pb-1 pl-[26px] text-left text-[15px] leading-5">
        <span className="relative h-9 w-[34px]">
          <svg viewBox="0 0 28 28" className="absolute bottom-0 left-0 size-7">
            <defs>
              <linearGradient id="moon" x1="0" y1="0" x2="0" y2="1">
                <stop offset="0" stopColor="#f7c331" />
                <stop offset="1" stopColor="#ee7a1c" />
              </linearGradient>
            </defs>
            <path d="M25 3c5 9 1 24-11.500 24C7 27 2 23 .5 17.500c8 1.500 17-2 19-12.500Z" fill="url(#moon)" />
          </svg>
          <span className="absolute top-0 right-0 flex size-5 items-center justify-center rounded-full bg-[#c42b1c] text-xs font-semibold text-white">
            1
          </span>
        </span>
        <span>
          <span className="block">39°F</span>
          <span className="block text-[#6b6361]">Clear</span>
        </span>
      </button>

      <div className="flex items-center pr-[5px]">
        <button aria-label="Start" className="flex w-[55px] justify-center">
          <StartIcon />
        </button>
        <label className="mr-[2px] ml-1 flex h-[39px] w-[275px] items-center rounded-full border border-[#e5d6d1] border-b-[#cdbfba] bg-[#fdf7f5] px-[13px]">
          <svg viewBox="0 0 19 19" className="size-[19px]" fill="none" stroke="#1b1b1b" strokeWidth="2">
            <circle cx="8" cy="8" r="6.800" />
            <path d="m13 13 5 5" strokeLinecap="round" />
          </svg>
          <input
            aria-label="Search"
            placeholder="Search"
            className="ml-3 min-w-0 flex-1 bg-transparent outline-none placeholder:text-[#5f5b58]"
          />
          <BouquetIcon />
        </label>
        {taskApps.map(app => (
          <button key={app.name} aria-label={app.name} className="flex w-[55px] justify-center">
            <span
              className={clsx(
                'relative flex size-[49px] items-center justify-center rounded-md',
                app.active && 'border border-[#ebe5e3] bg-[#f9f5f4]'
              )}
            >
              {app.icon}
              {app.running && (
                <span
                  className={clsx(
                    'absolute bottom-0 h-1 rounded-full',
                    app.active ? 'w-5 bg-[#0b4a86]' : 'w-2 bg-[#8f8583]'
                  )}
                />
              )}
            </span>
          </button>
        ))}
      </div>

      <div className="flex items-center justify-end pr-[25px]">
        <button aria-label="Show hidden icons" className="mr-[23px]">
          <svg viewBox="0 0 14 9" className="h-[9px] w-[14px]" fill="none" stroke="#1b1b1b" strokeWidth="1.700">
            <path d="m1 7.800 6-6 6 6" />
          </svg>
        </button>
        <button aria-label="OneDrive" className="mr-5">
          <svg viewBox="0 0 21 20" className="h-5 w-[21px]">
            <path d="M4.500 13.500A4 4 0 0 1 3.800 6 6.500 6.500 0 0 1 15.300 4.600a4.600 4.600 0 0 1 3.200 8.900Z" fill="#b5b2b0" stroke="#4b4948" strokeWidth="1.200" />
            <circle cx="14.500" cy="13.500" r="6" fill="#0a78d4" />
            <path d="M14.500 12.300v4.200M14.500 10v1.300" stroke="#fff" strokeWidth="1.500" />
          </svg>
        </button>
        <button aria-label="Network, volume and battery" className="flex items-center gap-[10px]">
          <svg viewBox="0 0 20 16" className="h-4 w-5" fill="none" stroke="#1b1b1b" strokeWidth="1.400" strokeLinecap="round">
            <path d="M1 5.800a12.700 12.700 0 0 1 18 0M3.800 8.800a8.700 8.700 0 0 1 12.400 0M6.600 11.500a4.800 4.800 0 0 1 6.800 0" />
            <circle cx="10" cy="14" r="1" fill="#1b1b1b" />
          </svg>
          <svg viewBox="0 0 20 16" className="h-4 w-5" fill="none" stroke="#1b1b1b" strokeWidth="1.300" strokeLinejoin="round">
            <path d="M1 5.500h3L8 1.800v12.400L4 10.500H1Z" />
            <path d="M10.800 5.300c1.300 1.500 1.300 3.900 0 5.400" strokeLinecap="round" />
            <path d="M13.500 3.200c2.500 2.600 2.500 7 0 9.600M16.300 1c3.600 3.700 3.600 10.300 0 14" stroke="#b5acaa" strokeLinecap="round" />
          </svg>
          <svg viewBox="0 0 26 16" className="h-4 w-[26px]">
            <rect x=".8" y="3.800" width="22" height="11.400" rx="3.500" fill="#fff" stroke="#1b1b1b" strokeWidth="1.400" />
            <rect x="2.300" y="5.300" width="19" height="8.400" rx="2" fill="#10831a" />
            <path d="M24.300 7.500v4" stroke="#1b1b1b" strokeWidth="1.800" strokeLinecap="round" />
            <path d="M12.500 0 8.500 6.500H11L10.500 11 15 4.800h-2.800Z" fill="#1b1b1b" stroke="#f3f3f3" strokeWidth=".8" />
          </svg>
        </button>
        <div className="ml-[18px] pb-1 text-right text-[15px] leading-5">
          <div>1:47 AM</div>
          <div>5/7/2026</div>
        </div>
        <button aria-label="Notifications" className="ml-[11px]">
          <svg viewBox="0 0 18 19" className="h-[19px] w-[18px]" fill="none" stroke="#1b1b1b" strokeWidth="1.300" strokeLinejoin="round">
            <path d="M10 2.300C6 1.300 2.800 4 2.800 8v3L1 15h14.500l-1.300-3" />
            <path d="M6 15.500a2.300 2.300 0 0 0 4.500 0" />
            <path d="M12.500 1.300H17l-4.500 5.500H17M6.500 7h3.700l-3.700 4.500h3.700" />
          </svg>
        </button>
      </div>
    </footer>
  )
}

export default function App() {
  return (
    <div className="flex min-h-screen flex-col bg-linear-to-br from-[#faf1e7] via-[#faf1ec] via-30% to-[#faf0f0] font-['Open_Sans','Noto_Sans',sans-serif] text-xl leading-7 text-[#1b1b1b]">
      <TitleBar />
      <div className="flex flex-1">
        <Sidebar />
        <VpnPage />
      </div>
      <Taskbar />
    </div>
  )
}
